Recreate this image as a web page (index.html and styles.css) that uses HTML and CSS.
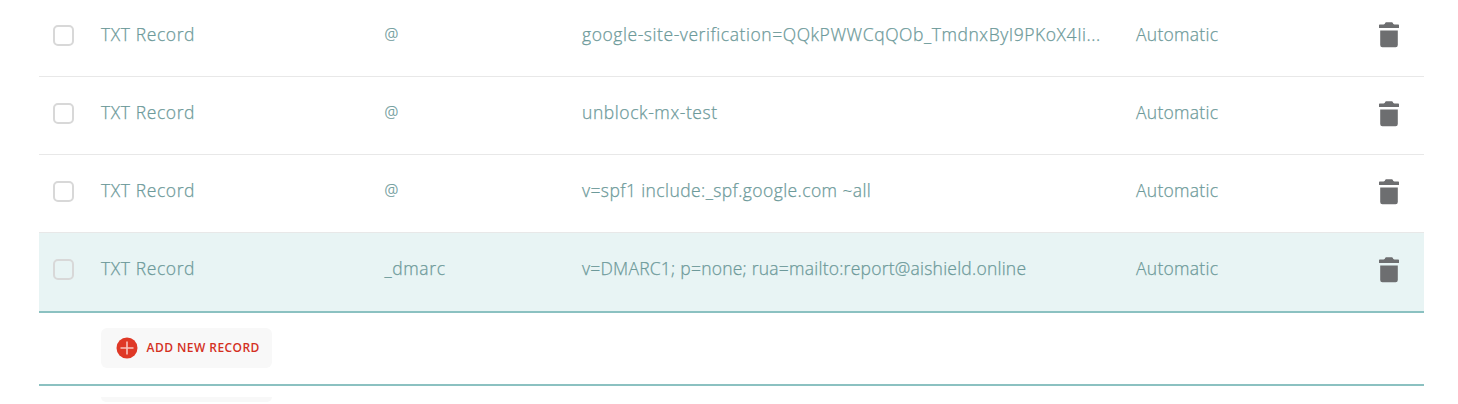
FILE: index.html
```html
<!DOCTYPE html>
<html lang="en">
<head>
<meta charset="utf-8">
<title>Host Records</title>
<link rel="stylesheet" href="styles.css">
</head>
<body>
<svg class="defs" width="0" height="0"><symbol id="trash" viewBox="0 0 20 26"><path d="M0 3.2Q0 2.500 .7 2.500H4.500Q6 2.200 6.300.7Q6.500.3 7 .3H13Q13.500.3 13.700.7Q14 2.200 15.500 2.500H19.300Q20 2.500 20 3.200V6H0ZM1.200 8.500H18.800V23Q18.800 25.200 16.600 25.200H3.400Q1.200 25.200 1.200 23Z"/></symbol></svg>
<main class="records">
  <div class="row">
    <span class="check"></span><span class="type">TXT Record</span><span class="host">@</span><span class="value v-google">google-site-verification=QQkPWWCqQOb_TmdnxByI9PKoX4Ii...</span><span class="ttl">Automatic</span><svg class="trash"><use href="#trash"/></svg>
  </div>
  <div class="row">
    <span class="check"></span><span class="type">TXT Record</span><span class="host">@</span><span class="value v-mx">unblock-mx-test</span><span class="ttl">Automatic</span><svg class="trash"><use href="#trash"/></svg>
  </div>
  <div class="row">
    <span class="check"></span><span class="type">TXT Record</span><span class="host">@</span><span class="value v-spf">v=spf1 include:_spf.google.com ~all</span><span class="ttl">Automatic</span><svg class="trash"><use href="#trash"/></svg>
  </div>
  <div class="row active">
    <span class="check"></span><span class="type">TXT Record</span><span class="host named">_dmarc</span><span class="value v-dmarc">v=DMARC1; p=none; rua=mailto:report@aishield.online</span><span class="ttl">Automatic</span><svg class="trash"><use href="#trash"/></svg>
  </div>
  <div class="add-row">
    <div class="add"><svg class="plus" viewBox="0 0 22 22"><circle cx="11" cy="11" r="10.500" fill="#df3826"/><path d="M11 4.500V17.500M4.500 11H17.500" stroke="#f8c4bd" stroke-width="1.600"/></svg><span>ADD NEW RECORD</span></div>
  </div>
  <div class="next"></div>
</main>
</body>
</html>
```
FILE: styles.css
```css
* { box-sizing: border-box; }
body { margin: 0; height: 404px; overflow: hidden; background: #fff; font-family: "Open Sans", sans-serif; }
.defs { display: block; }
.records { width: 1385px; margin: -1px 0 0 39px; }
.row {
  display: grid;
  grid-template-columns: 62px 283.500px 197.500px 554px 242px 1fr;
  height: 78px;
  padding-top: 23px;
  align-items: start;
  border-bottom: 1px solid #e8e8e8;
  color: #6d9a9a;
  font-size: 17.500px;
  font-weight: 300;
  -webkit-text-stroke: .25px #6d9a9a;
  line-height: 24px;
  white-space: nowrap;
}
.active { height: 80px; background: #e8f4f4; border-bottom: 2px solid #8bc1c1; }
.type { letter-spacing: .6px; }
.host { font-size: 15.500px; }
.named { font-size: 17.500px; letter-spacing: .6px; }
.v-google { letter-spacing: .56px; }
.v-mx { letter-spacing: .58px; }
.v-spf { letter-spacing: .41px; }
.v-dmarc { letter-spacing: .23px; }
.ttl { letter-spacing: .28px; }
.check { width: 21px; height: 21px; margin: 3px 0 0 14px; border: 2px solid #d8d8d8; border-radius: 5px; }
.trash { width: 20px; height: 26px; fill: #6d6e70; margin-left: 1px; }
.row + .row .trash { margin-top: 1px; }
.add-row { height: 73px; padding: 15px 0 0 62px; border-bottom: 2px solid #8bc1c1; }
.add {
  display: flex; align-items: center; gap: 9px;
  width: 171px; height: 40px; padding: 0 0 1px 14.500px;
  border-radius: 6px; background: #f8f8f8;
  color: #d4301f; font-size: 12px; font-weight: 600; letter-spacing: .45px; white-space: nowrap;
}
.plus { width: 22px; height: 22px; }
.next { width: 171px; height: 5px; margin: 11px 0 0 62px; border-radius: 0 0 6px 6px; background: #f8f8f8; }
```
